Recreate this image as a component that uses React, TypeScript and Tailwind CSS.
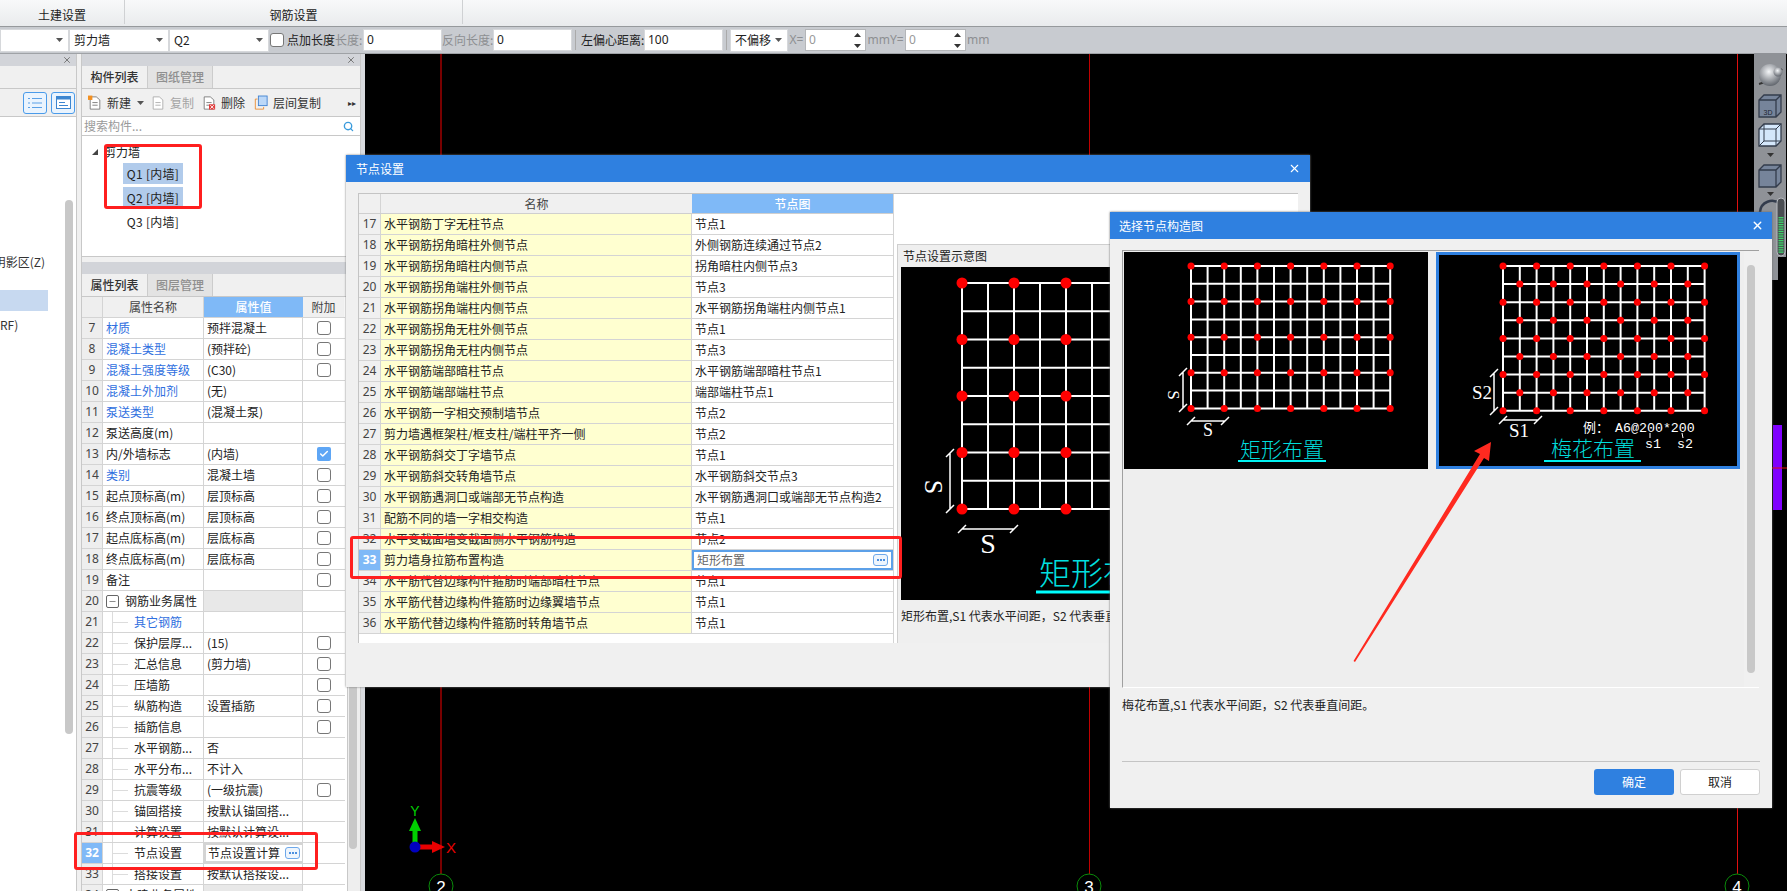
import { Search, X, Check, Minus } from 'lucide-react'

const nodeRows: [number, string, string][] = [
  [17, '水平钢筋丁字无柱节点', '节点1'],
  [18, '水平钢筋拐角暗柱外侧节点', '外侧钢筋连续通过节点2'],
  [19, '水平钢筋拐角暗柱内侧节点', '拐角暗柱内侧节点3'],
  [20, '水平钢筋拐角端柱外侧节点', '节点3'],
  [21, '水平钢筋拐角端柱内侧节点', '水平钢筋拐角端柱内侧节点1'],
  [22, '水平钢筋拐角无柱外侧节点', '节点1'],
  [23, '水平钢筋拐角无柱内侧节点', '节点3'],
  [24, '水平钢筋端部暗柱节点', '水平钢筋端部暗柱节点1'],
  [25, '水平钢筋端部端柱节点', '端部端柱节点1'],
  [26, '水平钢筋一字相交预制墙节点', '节点2'],
  [27, '剪力墙遇框架柱/框支柱/端柱平齐一侧', '节点2'],
  [28, '水平钢筋斜交丁字墙节点', '节点1'],
  [29, '水平钢筋斜交转角墙节点', '水平钢筋斜交节点3'],
  [30, '水平钢筋遇洞口或端部无节点构造', '水平钢筋遇洞口或端部无节点构造2'],
  [31, '配筋不同的墙一字相交构造', '节点1'],
  [32, '水平变截面墙变截面侧水平钢筋构造', '节点2'],
  [33, '剪力墙身拉筋布置构造', '矩形布置'],
  [34, '水平筋代替边缘构件箍筋时端部暗柱节点', '节点1'],
  [35, '水平筋代替边缘构件箍筋时边缘翼墙节点', '节点1'],
  [36, '水平筋代替边缘构件箍筋时转角墙节点', '节点1'],
]

type Prop = {
  n: number
  name: string
  value?: string
  blue?: boolean
  box?: boolean
  checked?: boolean
  child?: boolean
  group?: boolean
  active?: boolean
}

const props: Prop[] = [
  { n: 7, name: '材质', value: '预拌混凝土', blue: true, box: true },
  { n: 8, name: '混凝土类型', value: '(预拌砼)', blue: true, box: true },
  { n: 9, name: '混凝土强度等级', value: '(C30)', blue: true, box: true },
  { n: 10, name: '混凝土外加剂', value: '(无)', blue: true },
  { n: 11, name: '泵送类型', value: '(混凝土泵)', blue: true },
  { n: 12, name: '泵送高度(m)' },
  { n: 13, name: '内/外墙标志', value: '(内墙)', box: true, checked: true },
  { n: 14, name: '类别', value: '混凝土墙', blue: true, box: true },
  { n: 15, name: '起点顶标高(m)', value: '层顶标高', box: true },
  { n: 16, name: '终点顶标高(m)', value: '层顶标高', box: true },
  { n: 17, name: '起点底标高(m)', value: '层底标高', box: true },
  { n: 18, name: '终点底标高(m)', value: '层底标高', box: true },
  { n: 19, name: '备注', box: true },
  { n: 20, name: '钢筋业务属性', group: true },
  { n: 21, name: '其它钢筋', blue: true, child: true },
  { n: 22, name: '保护层厚...', value: '(15)', child: true, box: true },
  { n: 23, name: '汇总信息', value: '(剪力墙)', child: true, box: true },
  { n: 24, name: '压墙筋', child: true, box: true },
  { n: 25, name: '纵筋构造', value: '设置插筋', child: true, box: true },
  { n: 26, name: '插筋信息', child: true, box: true },
  { n: 27, name: '水平钢筋...', value: '否', child: true },
  { n: 28, name: '水平分布...', value: '不计入', child: true },
  { n: 29, name: '抗震等级', value: '(一级抗震)', child: true, box: true },
  { n: 30, name: '锚固搭接', value: '按默认锚固搭...', child: true },
  { n: 31, name: '计算设置', value: '按默认计算设...', child: true },
  { n: 32, name: '节点设置', value: '节点设置计算', child: true, active: true },
  { n: 33, name: '搭接设置', value: '按默认搭接设...', child: true },
  { n: 34, name: '土建业务属性', group: true },
]

function Caret() {
  return (
    <svg width="7" height="4" viewBox="0 0 7 4" className="shrink-0">
      <path d="M0 0h7L3.5 4z" fill="#555" />
    </svg>
  )
}

function Select({ w, text }: { w: string; text?: string }) {
  return (
    <div className={`${w} h-[23px] shrink-0 bg-white border border-[#d6d8db] flex items-center justify-between pl-1 pr-[5px]`}>
      <span>{text}</span>
      <Caret />
    </div>
  )
}

function Input({ w, value }: { w: string; value: string }) {
  return (
    <div className={`${w} h-[22px] shrink-0 bg-white border border-[#d6d8db] flex items-center px-[3px] font-['Noto_Sans',sans-serif]`}>
      {value}
    </div>
  )
}

function Spin() {
  return (
    <div className="w-[61px] h-[22px] shrink-0 bg-white border border-[#b4b6b9] flex items-center justify-between pl-[3px] pr-1 text-[#999] font-['Noto_Sans',sans-serif]">
      0
      <svg width="7" height="15" viewBox="0 0 7 15">
        <path d="M0 4 3.5 0 7 4zM0 11h7l-3.500 4z" fill="#333" />
      </svg>
    </div>
  )
}

function Toolbar() {
  return (
    <div className="h-[26px] shrink-0 bg-[#c8cbd0] flex items-center text-[12px] text-[#222] whitespace-nowrap">
      <Select w="w-[69px]" />
      <Select w="w-[100px]" text="剪力墙" />
      <Select w="w-[100px]" text="Q2" />
      <div className="w-[14px] h-[14px] ml-[1px] bg-white border border-[#777] rounded-[3px] shrink-0" />
      <span className="ml-[3px] w-[48px] shrink-0">点加长度</span>
      <span className="w-[28px] shrink-0 text-[#8d8f92]">长度:</span>
      <Input w="w-[79px]" value="0" />
      <span className="w-[51px] shrink-0 text-[#8d8f92]">反向长度:</span>
      <Input w="w-[79px]" value="0" />
      <div className="w-[1px] h-[20px] bg-[#aaa] mx-[3px]" />
      <span className="w-[63px] shrink-0 ml-[2px]">左偏心距离:</span>
      <Input w="w-[79px]" value="100" />
      <div className="w-[1px] h-[20px] bg-[#aaa] mx-[3px]" />
      <Select w="w-[58px]" text="不偏移" />
      <span className="w-[17px] shrink-0 text-[#8d8f92] font-['Noto_Sans',sans-serif] text-center">X=</span>
      <Spin />
      <span className="w-[39px] shrink-0 text-[#8d8f92] font-['Noto_Sans',sans-serif] text-center">mmY=</span>
      <Spin />
      <span className="ml-[1px] text-[#8d8f92] font-['Noto_Sans',sans-serif]">mm</span>
    </div>
  )
}

function Tabs({ a, b }: { a: string; b: string }) {
  return (
    <div className="h-[23px] shrink-0 bg-[#f0f0f0] border-b border-[#c8c8c8] flex text-[12px] font-medium">
      <div className="w-[66px] flex items-center justify-center text-[#333] border-r border-[#ccc]">{a}</div>
      <div className="w-[65px] flex items-center justify-center text-[#8f8f8f] bg-[#e3e3e3] border-r border-[#ccc]">{b}</div>
    </div>
  )
}

function PanelHead() {
  return (
    <div className="h-[12px] shrink-0 bg-[#d2d4d9] flex items-center justify-end pr-[4px]">
      <X size={10} strokeWidth={2} className="text-[#666]" />
    </div>
  )
}

function DocIcon({ kind }: { kind: 'new' | 'copy' | 'del' | 'floor' }) {
  if (kind === 'floor') {
    return (
      <svg width="14" height="16" viewBox="0 0 16 17">
        <rect x="5" y="0.500" width="10" height="11" fill="#bcd8f8" stroke="#3d7fd0" />
        <path d="M4 4H1.500V15.500H11V13" fill="none" stroke="#e98a2f" />
      </svg>
    )
  }
  const stroke = kind === 'copy' ? '#aaa' : '#777'
  return (
    <svg width="14" height="16" viewBox="0 0 16 17">
      <path d="M2.500 1.500H9.500L13.500 5V15.500H2.500z" fill="#fff" stroke={stroke} />
      <path d="M5 8h6M5 11h6" stroke={stroke} />
      {kind === 'new' && <rect x="0" y="0" width="5" height="5" fill="#f29022" />}
      {kind === 'del' && <path d="M8 10h7v6H8z" fill="#e23d3d" />}
      {kind === 'del' && <path d="m9.500 11 4 4m0-4-4 4" stroke="#fff" />}
    </svg>
  )
}

function Btn({ kind, label, muted }: { kind: 'new' | 'copy' | 'del' | 'floor'; label: string; muted?: boolean }) {
  return (
    <div className={`flex items-center gap-[5px] ${muted ? 'text-[#a5a5a5]' : 'text-[#333]'}`}>
      <DocIcon kind={kind} />
      <span>{label}</span>
    </div>
  )
}

function EllipsisBtn() {
  return (
    <div className="w-[15px] h-[12px] rounded-[3px] border border-[#6ea8ea] bg-[#eef5fd] flex items-center justify-center gap-[1px]">
      <i className="w-[2px] h-[2px] bg-[#4b8fe0]" />
      <i className="w-[2px] h-[2px] bg-[#4b8fe0]" />
      <i className="w-[2px] h-[2px] bg-[#4b8fe0]" />
    </div>
  )
}

function PropRow({ p }: { p: Prop }) {
  return (
    <div className="h-[21px] shrink-0 flex border-b border-[#d4d4d4]">
      <div
        className={`w-[21px] shrink-0 flex items-center justify-center border-r border-[#d4d4d4] text-[12px] font-['Noto_Sans',sans-serif] ${
          p.active ? 'bg-[#7fb9f7] text-white font-bold' : 'bg-[#eeeeee] text-[#444]'
        }`}
      >
        {p.n}
      </div>
      <div className={`w-[101px] shrink-0 relative flex items-center border-r border-[#d4d4d4] ${p.blue ? 'text-[#2f6fe0]' : 'text-[#222]'}`}>
        {p.child && (
          <>
            <span className="absolute left-[9px] top-0 bottom-0 w-[1px] bg-[#dcdcdc]" />
            <span className="absolute left-[9px] top-[10px] w-[16px] h-[1px] bg-[#dcdcdc]" />
          </>
        )}
        {p.group && (
          <span className="ml-[3px] mr-[6px] w-[13px] h-[13px] rounded-[2px] border border-[#666] flex items-center justify-center">
            <Minus size={9} strokeWidth={1.500} className="text-[#333]" />
          </span>
        )}
        <span className={p.child ? 'ml-[31px]' : p.group ? '' : 'ml-[3px]'}>{p.name}</span>
      </div>
      <div
        className={`w-[99px] shrink-0 flex items-center justify-between border-r border-[#d4d4d4] px-[3px] whitespace-nowrap ${
          p.group ? 'bg-[#e8e8e8]' : ''
        } ${p.active ? 'border-2 border-[#5ca0e8] pr-[2px] pl-[2px]' : ''}`}
      >
        <span>{p.value}</span>
        {p.active && <EllipsisBtn />}
      </div>
      <div className="w-[41px] shrink-0 flex items-center justify-center">
        {p.box &&
          (p.checked ? (
            <span className="w-[14px] h-[14px] rounded-[2px] bg-[#5ea6f5] flex items-center justify-center">
              <Check size={10} strokeWidth={3.500} className="text-white" />
            </span>
          ) : (
            <span className="w-[14px] h-[14px] rounded-[3px] border border-[#777] bg-white" />
          ))}
      </div>
    </div>
  )
}

function ListPanel() {
  return (
    <div className="w-[280px] shrink-0 h-full flex flex-col bg-[#f0f0f0] border-x border-[#c8c8c8] text-[12px] text-[#222] overflow-hidden">
      <PanelHead />
      <Tabs a="构件列表" b="图纸管理" />
      <div className="h-[28px] shrink-0 flex items-center border-b border-[#c8c8c8] pl-[6px] pr-[4px]">
        <Btn kind="new" label="新建" />
        <span className="ml-[6px] mr-[7px]">
          <Caret />
        </span>
        <Btn kind="copy" label="复制" muted />
        <span className="w-[8px]" />
        <Btn kind="del" label="删除" />
        <span className="w-[9px]" />
        <Btn kind="floor" label="层间复制" />
        <span className="ml-auto text-[8px] text-[#333]">▸▸</span>
      </div>
      <div className="h-[19px] shrink-0 bg-white border-b border-[#c8c8c8] flex items-center justify-between pl-[2px] pr-[6px] text-[#9a9a9a]">
        搜索构件...
        <Search size={11} strokeWidth={3} className="text-[#3a9bdc]" />
      </div>
      <div className="h-[121px] shrink-0 bg-white border-b border-[#c8c8c8] pt-[7px] pl-[10px] flex flex-col">
        <div className="h-[17px] flex items-center gap-[6px]">
          <svg width="6" height="6" viewBox="0 0 6 6">
            <path d="M6 0V6H0z" fill="#444" />
          </svg>
          <span>剪力墙</span>
        </div>
        <div className="mt-[3px] ml-[31px] w-[60px] h-[21px] bg-[#b1cbeb] flex items-center justify-center tracking-[0.3px]">Q1 [内墙]</div>
        <div className="mt-[3px] ml-[31px] w-[60px] h-[21px] bg-[#b1cbeb] flex items-center justify-center tracking-[0.3px]">Q2 [内墙]</div>
        <div className="mt-[3px] ml-[31px] w-[60px] h-[21px] flex items-center justify-center tracking-[0.3px]">Q3 [内墙]</div>
      </div>
      <div className="h-[5px] shrink-0 bg-[#f0f0f0]" />
      <PanelHead />
      <Tabs a="属性列表" b="图层管理" />
      <div className="flex-1 min-h-0 flex overflow-hidden">
        <div className="w-[263px] shrink-0 bg-white flex flex-col">
          <div className="h-[21px] shrink-0 flex border-b border-[#d4d4d4] text-[#444]">
            <div className="w-[21px] bg-[#eeeeee] border-r border-[#d4d4d4]" />
            <div className="w-[101px] bg-[#f0f0f0] border-r border-[#d4d4d4] flex items-center justify-center">属性名称</div>
            <div className="w-[99px] bg-[#7fb9f7] text-white font-medium flex items-center justify-center">属性值</div>
            <div className="w-[41px] bg-[#f0f0f0] flex items-center justify-center">附加</div>
          </div>
          {props.map((p) => (
            <PropRow key={p.n} p={p} />
          ))}
        </div>
        <div className="w-[2px] bg-white" />
        <div className="w-[1px] bg-[#c8c8c8]" />
        <div className="flex-1 bg-[#eeeeee] px-[1px]">
          <div className="mt-[300px] h-[252px] w-[8px] rounded-[4px] bg-[#c8c8c8]" />
        </div>
      </div>
    </div>
  )
}

function LeftPanel() {
  return (
    <div className="w-[77px] shrink-0 h-full flex flex-col bg-white border-r border-[#c8c8c8] text-[12px] text-[#222] overflow-hidden">
      <PanelHead />
      <div className="h-[23px] shrink-0 bg-[#f0f0f0] border-b border-[#c8c8c8]" />
      <div className="h-[28px] shrink-0 bg-[#f0f0f0] border-b border-[#c8c8c8] flex items-center pl-[23px] gap-[4px]">
        <div className="w-[24px] h-[22px] rounded-[3px] border border-[#4a9bea] bg-[#eaf4fe] flex items-center justify-center">
          <svg width="14" height="12" viewBox="0 0 14 12" stroke="#5aa0e6" fill="none">
            <path d="M0 1.500h2M4 1.500h10M0 6h2M4 6h10M0 10.500h2M4 10.500h10" />
          </svg>
        </div>
        <div className="w-[24px] h-[22px] rounded-[3px] border border-[#4a9bea] bg-[#eaf4fe] flex items-center justify-center">
          <svg width="15" height="13" viewBox="0 0 15 13">
            <rect x="0.500" y="0.500" width="14" height="12" fill="#fff" stroke="#3d86d0" />
            <rect x="0.500" y="0.500" width="14" height="3" fill="#3d86d0" />
            <path d="M3 6.500h6M3 9.500h9" stroke="#3d86d0" />
          </svg>
        </div>
      </div>
      <div className="flex-1 min-h-0 flex overflow-hidden">
        <div className="w-[65px] shrink-0 flex flex-col overflow-hidden">
          <div className="h-[134px] shrink-0" />
          <div className="h-[21px] shrink-0 flex items-center justify-end pr-[20px] whitespace-nowrap text-[#333]">阴影区(Z)</div>
          <div className="h-[18px] shrink-0" />
          <div className="h-[21px] w-[48px] shrink-0 bg-[#c7d9f0]" />
          <div className="h-[3px] shrink-0" />
          <div className="h-[21px] shrink-0 flex items-center whitespace-nowrap text-[#333]">RF)</div>
        </div>
        <div className="w-[8px] shrink-0 bg-white">
          <div className="mt-[83px] h-[534px] rounded-[4px] bg-[#c8c8c8]" />
        </div>
      </div>
    </div>
  )
}

function CadCanvas() {
  return (
    <div className="flex-1 h-full min-w-0 bg-black overflow-hidden">
      <svg width="1422" height="837" viewBox="365 54 1422 837" className="block">
        <path d="M441 54V891" stroke="#a00000" strokeWidth="1.500" />
        <path d="M1089.500 54V891" stroke="#c00000" />
        <path d="M1737.500 54V891" stroke="#e01010" />
        <rect x="1773" y="425" width="9" height="85" fill="#8000ff" />
        <path d="M1772 468H1787" stroke="#e01010" />
        {[441, 1089, 1737].map((x, i) => (
          <g key={x}>
            <circle cx={x} cy={886} r={12} fill="#000" stroke="#0a8a0a" />
            <text x={x} y={893} textAnchor="middle" fontSize="17" fill="#fff" fontFamily="Liberation Sans">
              {i + 2}
            </text>
          </g>
        ))}
        <path d="M415 847V826" stroke="#00d000" strokeWidth="5" />
        <path d="M415 818l6 13h-12z" fill="#00d000" />
        <path d="M415 847h22" stroke="#e80000" strokeWidth="5" />
        <path d="M445 847l-13-6v12z" fill="#e80000" />
        <circle cx={415} cy={847} r={5.500} fill="#0000c0" />
        <text x={415} y={816} textAnchor="middle" fontSize="14" fill="#00d000" fontFamily="Liberation Sans">Y</text>
        <text x={451} y={853} textAnchor="middle" fontSize="15" fill="#e80000" fontFamily="Liberation Sans">X</text>
      </svg>
    </div>
  )
}

function ViewTools() {
  return (
    <svg width="33" height="228" viewBox="1754 53 33 228" className="absolute left-[1754px] top-[53px]">
      <defs>
        <radialGradient id="ball" cx="0.450" cy="0.350" r="0.700">
          <stop offset="0" stopColor="#f4f6f8" />
          <stop offset="1" stopColor="#565b63" />
        </radialGradient>
      </defs>
      <path d="M1754 53h32v204h-8v23h-24z" fill="#8f9297" />
      <path d="M1759 84q13-3 23-15" stroke="#333" strokeWidth="2" fill="none" />
      <circle cx="1770" cy="75" r="11" fill="url(#ball)" />
      <circle cx="1778" cy="72" r="4.500" fill="url(#ball)" />
      <path d="M1759 100l5-5h17v17l-5 5h-17zM1759 100h17v17M1776 100l5-5" fill="#76849a" stroke="#333c4c" strokeWidth="1.300" />
      <text x="1768" y="115" textAnchor="middle" fontSize="7" fill="#1c2530" fontFamily="Liberation Sans">3D</text>
      <path d="M1759 129l5-5h17v17l-5 5h-17z" fill="#d4e7fb" stroke="#333c4c" strokeWidth="1.300" />
      <path d="M1759 129h17v17M1776 129l5-5M1764 124v17h17M1764 141l-5 5" fill="none" stroke="#333c4c" />
      <path d="M1767 153h7l-3.500 4z" fill="#333" />
      <path d="M1759 170l5-5h17v17l-5 5h-17zM1759 170h17v17M1776 170l5-5" fill="#76849a" stroke="#333c4c" strokeWidth="1.300" />
      <path d="M1767 192h7l-3.500 4z" fill="#333" />
      <path d="M1760 212a12 12 0 0 1 20-8" stroke="#333c4c" strokeWidth="2.500" fill="none" />
      <rect x="1777" y="198" width="8" height="58" rx="4" fill="#4a4d52" stroke="#b8bbc0" />
      {Array.from({ length: 16 }, (_, i) => (
        <rect key={i} x="1778.500" y={217 + i * 2.300} width="5" height="1.300" fill="#3fd46a" />
      ))}
    </svg>
  )
}

function Rebar({
  x0,
  y0,
  dx,
  dy,
  r,
  sw,
  stagger,
}: {
  x0: number
  y0: number
  dx: number
  dy: number
  r: number
  sw: number
  stagger?: boolean
}) {
  const lines = []
  const dots = []
  for (let c = 0; c <= 12; c++) {
    lines.push(<path key={`c${c}`} d={`M${x0 + c * dx} ${y0}V${y0 + 8 * dy}`} stroke="#fff" strokeWidth={sw} />)
  }
  for (let w = 0; w <= 8; w++) {
    lines.push(<path key={`r${w}`} d={`M${x0} ${y0 + w * dy}H${x0 + 12 * dx}`} stroke="#fff" strokeWidth={sw} />)
  }
  for (let w = 0; w <= 8; w++) {
    for (let c = 0; c <= 12; c++) {
      const even = w % 2 === 0 && c % 2 === 0
      const odd = stagger && w % 2 === 1 && c % 2 === 1
      if (even || odd) dots.push(<circle key={`${w}-${c}`} cx={x0 + c * dx} cy={y0 + w * dy} r={r} fill="#ff0000" />)
    }
  }
  return (
    <>
      {lines}
      {dots}
    </>
  )
}

function Dim({ x1, y1, x2, y2 }: { x1: number; y1: number; x2: number; y2: number }) {
  const t = 4
  return (
    <path
      d={`M${x1} ${y1}L${x2} ${y2}M${x1 - t} ${y1 + t}l${t * 2} ${-t * 2}M${x2 - t} ${y2 + t}l${t * 2} ${-t * 2}`}
      stroke="#fff"
      strokeWidth="1.500"
      fill="none"
    />
  )
}

const cjk = "'Noto Sans CJK SC', sans-serif"
const serif = "'Liberation Serif', serif"

function RectTile() {
  return (
    <svg width="304" height="217" viewBox="0 0 304 217" className="block shrink-0 bg-black">
      <Rebar x0={67} y0={14} dx={16.600} dy={17.800} r={3.500} sw={2} />
      <Dim x1={59} y1={120} x2={59} y2={156} />
      <Dim x1={67} y1={169} x2={101} y2={169} />
      <text x={48} y={139} textAnchor="middle" fontSize="17" fill="#fff" fontFamily={serif} transform="rotate(90 44 139)">S</text>
      <text x={84} y={184} textAnchor="middle" fontSize="18" fill="#fff" fontFamily={serif}>S</text>
      <text x={116} y={205} fontSize="21" fontWeight="300" fill="#00dcdc" fontFamily={cjk}>矩形布置</text>
      <path d="M114 209H202" stroke="#00f0f0" strokeWidth="2" />
    </svg>
  )
}

function PlumTile() {
  return (
    <div className="border-[3px] border-[#2f80e0] shrink-0 ml-[8px]">
      <svg width="298" height="211" viewBox="0 0 298 211" className="block bg-black">
        <Rebar x0={64} y0={11} dx={16.800} dy={18.100} r={3.500} sw={2} stagger />
        <Dim x1={55} y1={118} x2={55} y2={156} />
        <Dim x1={64} y1={165} x2={99} y2={165} />
        <text x={33} y={144} fontSize="19" fill="#fff" fontFamily={serif}>S2</text>
        <text x={70} y={182} fontSize="19" fill="#fff" fontFamily={serif}>S1</text>
        <text x={144} y={177} fontSize="13" fill="#fff" fontFamily={cjk}>例：</text>
        <text x={176} y={177} fontSize="13.300" fill="#fff" fontFamily="'Liberation Mono', monospace">A6@200*200</text>
        <path d="M211 178v5M243 178l1 5" stroke="#fff" />
        <text x={206} y={193} fontSize="13.300" fill="#fff" fontFamily="'Liberation Mono', monospace">s1</text>
        <text x={238} y={193} fontSize="13.300" fill="#fff" fontFamily="'Liberation Mono', monospace">s2</text>
        <text x={112} y={201} fontSize="21" fontWeight="300" fill="#00dcdc" fontFamily={cjk}>梅花布置</text>
        <path d="M105 206H202" stroke="#00f0f0" strokeWidth="2" />
      </svg>
    </div>
  )
}

function NodeDialog() {
  return (
    <div className="absolute left-[346px] top-[155px] w-[964px] h-[532px] bg-[#f0f0f0] flex flex-col text-[12px] text-[#222] shadow-[0_0_2px_#777]">
      <div className="h-[27px] shrink-0 bg-[#2f80e0] text-white flex items-center justify-between pl-[10px] pr-[9px]">
        节点设置
        <X size={13} strokeWidth={2} />
      </div>
      <div className="ml-[12px] mt-[11px] w-[940px] h-[450px] flex bg-white border-t border-l border-[#c4c4c4]">
        <div className="w-[535px] shrink-0 flex flex-col border-r border-[#d4d4d4]">
          <div className="h-[20px] shrink-0 flex border-b border-[#cfcfcf] text-[#444]">
            <div className="w-[22px] bg-[#f0f0f0] border-r border-[#d4d4d4]" />
            <div className="w-[311px] bg-[#f0f0f0] flex items-center justify-center">名称</div>
            <div className="flex-1 bg-[#7fb9f7] text-white font-medium flex items-center justify-center">节点图</div>
          </div>
          {nodeRows.map(([n, name, value]) => {
            const active = n === 33
            return (
              <div key={n} className="h-[21px] shrink-0 flex border-b border-[#d4d4d4]">
                <div
                  className={`w-[22px] shrink-0 flex items-center justify-center border-r border-[#d4d4d4] font-['Noto_Sans',sans-serif] ${
                    active ? 'bg-[#7fb9f7] text-white font-bold' : 'bg-[#f0f0f0] text-[#444]'
                  }`}
                >
                  {n}
                </div>
                <div className="w-[311px] shrink-0 bg-[#ffffd0] flex items-center pl-[3px] border-r border-[#d4d4d4] whitespace-nowrap">{name}</div>
                {active ? (
                  <div className="flex-1 border-2 border-[#5ca0e8] flex items-center justify-between pl-[3px] pr-[3px] text-[#666]">
                    {value}
                    <EllipsisBtn />
                  </div>
                ) : (
                  <div className="flex-1 flex items-center pl-[3px] whitespace-nowrap">{value}</div>
                )}
              </div>
            )
          })}
        </div>
        <div className="flex-1 pt-[50px] pl-[3px] min-w-0">
          <div className="h-full bg-[#efefef] border-t border-l border-[#cfcfcf] flex flex-col pl-[3px]">
            <div className="h-[22px] shrink-0 flex items-center pl-[2px]">节点设置示意图</div>
            <svg width="398" height="333" viewBox="0 0 398 333" className="block shrink-0 bg-black">
              <Rebar x0={61} y0={16} dx={26} dy={28.250} r={5.500} sw={2} />
              <Dim x1={49} y1={186} x2={49} y2={242} />
              <Dim x1={61} y1={262} x2={113} y2={262} />
              <text x={29} y={215} textAnchor="middle" fontSize="26" fill="#fff" fontFamily={serif} transform="rotate(90 24 215)">S</text>
              <text x={87} y={286} textAnchor="middle" fontSize="28" fill="#fff" fontFamily={serif}>S</text>
              <text x={138} y={318} fontSize="32" fontWeight="300" fill="#00e0e0" fontFamily={cjk}>矩形布置</text>
              <path d="M135 325H300" stroke="#00ffff" strokeWidth="3" />
            </svg>
            <div className="h-[32px] flex items-center whitespace-nowrap">矩形布置,S1 代表水平间距，S2 代表垂直间距</div>
          </div>
        </div>
      </div>
    </div>
  )
}

function PickDialog() {
  return (
    <div className="absolute left-[1110px] top-[212px] w-[662px] h-[596px] bg-[#f0f0f0] flex flex-col text-[12px] text-[#222] shadow-[0_0_2px_#666]">
      <div className="h-[27px] shrink-0 bg-[#2f80e0] text-white flex items-center justify-between pl-[9px] pr-[8px]">
        选择节点构造图
        <X size={13} strokeWidth={2.500} />
      </div>
      <div className="ml-[12px] mt-[11px] w-[637px] h-[438px] shrink-0 border-t border-l border-[#a0a0a0] border-b border-b-white flex">
        <div className="flex-1 bg-[#eeeeee] flex items-start pl-[1px] pt-[1px]">
          <RectTile />
          <PlumTile />
        </div>
        <div className="w-[15px] shrink-0 bg-[#f0f0f0] pt-[14px] px-[3px]">
          <div className="h-[408px] w-[8px] rounded-[4px] bg-[#c8c8c8]" />
        </div>
      </div>
      <div className="ml-[12px] h-[29px] mt-[2px] flex items-center">梅花布置,S1 代表水平间距，S2 代表垂直间距。</div>
      <div className="flex-1" />
      <div className="mx-[12px] h-[1px] bg-[#c4c4c4]" />
      <div className="h-[46px] shrink-0 flex justify-end gap-[6px] pt-[7px] pr-[12px]">
        <div className="w-[80px] h-[26px] rounded-[3px] bg-[#2f80e0] text-white flex items-center justify-center">确定</div>
        <div className="w-[80px] h-[26px] rounded-[3px] bg-white border border-[#d0d0d0] flex items-center justify-center">取消</div>
      </div>
    </div>
  )
}

function Marks() {
  return (
    <>
      <div className="absolute left-[104px] top-[144px] w-[98px] h-[65px] border-[3px] border-[#ff1f1f] rounded-[3px]" />
      <div className="absolute left-[74px] top-[832px] w-[244px] h-[38px] border-[3px] border-[#ff1f1f] rounded-[3px]" />
      <div className="absolute left-[350px] top-[536px] w-[552px] h-[43px] border-[3px] border-[#ff1f1f] rounded-[3px]" />
      <svg width="160" height="240" viewBox="1345 435 160 240" className="absolute left-[1345px] top-[435px]">
        <path d="M1491 442 1474 451 1480 454 1353.500 661 1355 662 1484 458 1489 461z" fill="#ff2a20" />
      </svg>
    </>
  )
}

export default function App() {
  return (
    <div className="relative w-[1787px] h-[891px] overflow-hidden bg-[#c8cbd0] flex flex-col font-['Noto_Sans_CJK_SC','Noto_Sans',sans-serif] text-[12px] leading-none">
      <div className="h-[27px] shrink-0 bg-gradient-to-b from-[#f8f9fa] to-[#e9ebed] border-b border-[#96999c] flex items-start text-[#222]">
        <div className="w-[125px] h-[24px] border-r border-[#cfd1d3] flex items-center justify-center pt-[6px]">土建设置</div>
        <div className="w-[338px] h-[24px] border-r border-[#cfd1d3] flex items-center justify-center pt-[6px]">钢筋设置</div>
      </div>
      <Toolbar />
      <div className="flex-1 min-h-0 flex border-t border-[#9fa2a6]">
        <LeftPanel />
        <div className="w-[4px] shrink-0 bg-[#f0f0f0]" />
        <ListPanel />
        <div className="w-[4px] shrink-0 bg-[#d8dade]" />
        <CadCanvas />
      </div>
      <ViewTools />
      <NodeDialog />
      <PickDialog />
      <Marks />
    </div>
  )
}
